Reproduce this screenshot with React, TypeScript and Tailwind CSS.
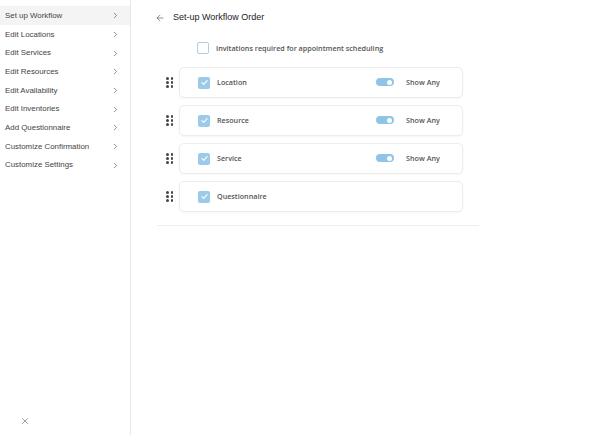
import { ArrowLeft, ChevronRight, X } from "lucide-react";

const menu = [
  "Set up Workflow",
  "Edit Locations",
  "Edit Services",
  "Edit Resources",
  "Edit Availability",
  "Edit Inventories",
  "Add Questionnaire",
  "Customize Confirmation",
  "Customize Settings",
];

const steps = [
  { label: "Location", toggle: true },
  { label: "Resource", toggle: true },
  { label: "Service", toggle: true },
  { label: "Questionnaire", toggle: false },
];

function DragHandle() {
  return (
    <div className="grid w-[8px] grid-cols-2 gap-x-[1.5px] gap-y-[1.5px]">
      {Array.from({ length: 6 }).map((_, i) => (
        <span key={i} className="h-[2.5px] w-[2.5px] rounded-full bg-[#444]" />
      ))}
    </div>
  );
}

function CheckBox({ checked }: { checked: boolean }) {
  if (!checked) {
    return <span className="block h-[12px] w-[12px] rounded-[2px] border border-[#a9d0ea] bg-white" />;
  }
  return (
    <span className="flex h-[12px] w-[12px] items-center justify-center rounded-[2px] bg-[#9ccbea]">
      <svg viewBox="0 0 12 12" className="h-[9px] w-[9px]" fill="none" stroke="white" strokeWidth="1.4" strokeLinecap="round" strokeLinejoin="round">
        <path d="M2.5 6.2 L5 8.5 L9.5 3.5" />
      </svg>
    </span>
  );
}

function Toggle() {
  return (
    <span className="flex h-[8px] w-[18px] items-center justify-end rounded-full bg-[#8ec4e8] pr-[2px]">
      <span className="h-[5px] w-[5px] rounded-full bg-white" />
    </span>
  );
}

export default function App() {
  return (
    <div className="flex h-[435px] w-[616px] bg-white font-['Liberation_Sans',Arial,sans-serif]">
      <aside className="flex w-[131px] shrink-0 flex-col border-r border-[#e8e8e8]">
        <nav className="flex flex-col pt-[6px]">
          {menu.map((item, i) => (
            <div
              key={item}
              className={`flex h-[18.7px] items-center justify-between pl-[5px] pr-[10px] pt-[1px] text-[7.9px] text-[#444] ${
                i === 0 ? "bg-[#f4f4f4]" : ""
              }`}
            >
              <span>{item}</span>
              <ChevronRight className="h-[9px] w-[9px] text-[#555]" strokeWidth={1.8} />
            </div>
          ))}
        </nav>
        <div className="mt-auto pb-[9px] pl-[20px]">
          <X className="h-[10px] w-[10px] text-[#666]" strokeWidth={1.5} />
        </div>
      </aside>

      <main className="flex-1 pl-[26px] pt-[11px]">
        <div className="flex h-[14px] w-[322px] items-center gap-[8px]">
          <ArrowLeft className="ml-[-2px] h-[10px] w-[10px] text-[#555]" strokeWidth={1.5} />
          <h1 className="text-[9px] text-[#222]">Set-up Workflow Order</h1>
        </div>

        <div className="w-[322px] border-b border-[#efefef] pb-[13px]">
          <div className="mt-[17px] flex items-center gap-[7px] pl-[40px] font-['Open_Sans',sans-serif]">
            <CheckBox checked={false} />
            <span className="text-[7.2px] font-semibold text-[#555]">
              Invitations required for appointment scheduling
            </span>
          </div>

          <div className="mt-[13px] flex flex-col gap-[7px] font-['Open_Sans',sans-serif]">
            {steps.map((s) => (
              <div key={s.label} className="flex items-center gap-[5px] pl-[9px]">
                <DragHandle />
                <div className="flex h-[31px] w-[284px] items-center rounded-[5px] border border-[#ececec] bg-white pl-[18px] pr-[20px] shadow-[0_1px_2px_rgba(0,0,0,0.04)]">
                  <CheckBox checked />
                  <span className="ml-[7px] text-[7.2px] font-semibold text-[#555]">{s.label}</span>
                  {s.toggle && (
                    <div className="ml-auto flex items-center gap-[12px]">
                      <Toggle />
                      <span className="w-[36px] text-[7.2px] font-semibold text-[#555]">Show Any</span>
                    </div>
                  )}
                </div>
              </div>
            ))}
          </div>
        </div>
      </main>
    </div>
  );
}
